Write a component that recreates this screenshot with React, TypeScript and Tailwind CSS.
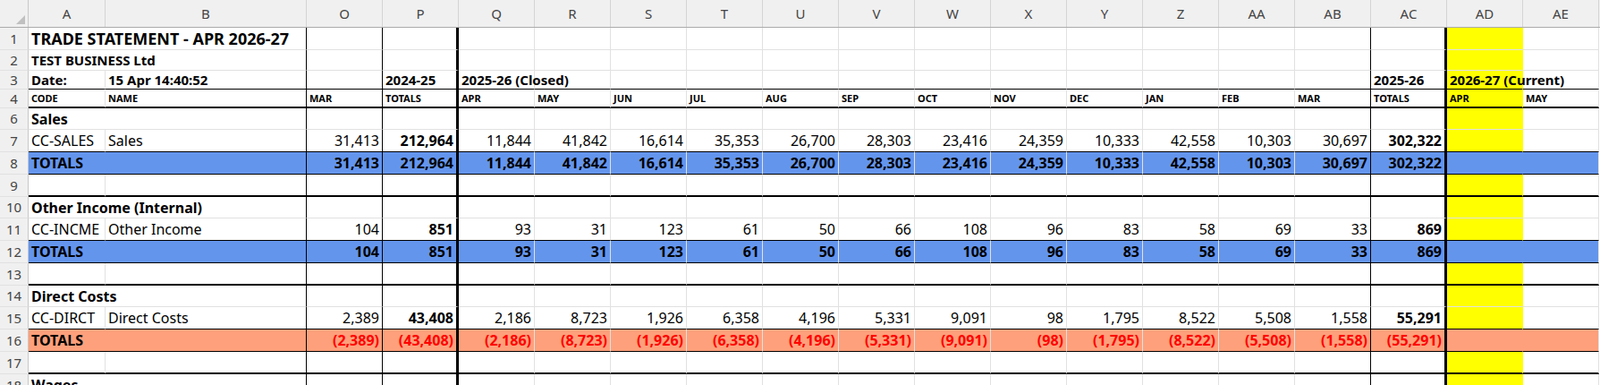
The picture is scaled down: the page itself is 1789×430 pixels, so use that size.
import React from 'react'

type Col = { id: string; w: string; r: string }

const cols: Col[] = [
  { id: 'A', w: 'w-[86px]', r: 'border-r border-r-[#e1e1e1]' },
  { id: 'B', w: 'w-[225px]', r: 'border-r border-r-black' },
  { id: 'O', w: 'w-[85px]', r: 'border-r border-r-black' },
  { id: 'P', w: 'w-[85px]', r: 'border-r-[3px] border-r-black' },
  { id: 'Q', w: 'w-[85px]', r: 'border-r border-r-[#e1e1e1]' },
  { id: 'R', w: 'w-[85px]', r: 'border-r border-r-[#e1e1e1]' },
  { id: 'S', w: 'w-[85px]', r: 'border-r border-r-[#e1e1e1]' },
  { id: 'T', w: 'w-[85px]', r: 'border-r border-r-[#e1e1e1]' },
  { id: 'U', w: 'w-[85px]', r: 'border-r border-r-[#e1e1e1]' },
  { id: 'V', w: 'w-[85px]', r: 'border-r border-r-[#e1e1e1]' },
  { id: 'W', w: 'w-[85px]', r: 'border-r border-r-[#e1e1e1]' },
  { id: 'X', w: 'w-[85px]', r: 'border-r border-r-[#e1e1e1]' },
  { id: 'Y', w: 'w-[85px]', r: 'border-r border-r-[#e1e1e1]' },
  { id: 'Z', w: 'w-[85px]', r: 'border-r border-r-[#e1e1e1]' },
  { id: 'AA', w: 'w-[85px]', r: 'border-r border-r-[#e1e1e1]' },
  { id: 'AB', w: 'w-[85px]', r: 'border-r border-r-black' },
  { id: 'AC', w: 'w-[85px]', r: 'border-r-[3px] border-r-black' },
  { id: 'AD', w: 'w-[85px]', r: 'border-r border-r-transparent' },
  { id: 'AE', w: 'w-[85px]', r: 'border-r border-r-[#e1e1e1]' },
]

type Kind = 'title' | 'sub' | 'head' | 'label' | 'section' | 'detail' | 'blank' | 'total' | 'neg'

type Row = {
  n: number
  h: string
  b: string
  kind: Kind
  cells: string[]
}

const nums = (o: string, p: string, m: string[], ac: string) => ['', '', o, p, ...m, ac, '', '']
const neg = (v: string) => `(${v})`

const sales = ['11,844', '41,842', '16,614', '35,353', '26,700', '28,303', '23,416', '24,359', '10,333', '42,558', '10,303', '30,697']
const other = ['93', '31', '123', '61', '50', '66', '108', '96', '83', '58', '69', '33']
const direct = ['2,186', '8,723', '1,926', '6,358', '4,196', '5,331', '9,091', '98', '1,795', '8,522', '5,508', '1,558']

const thin = 'border-b border-b-[#e1e1e1]'
const black = 'border-b border-b-black'
const heavy = 'border-b-2 border-b-black'

const withLabel = (c: string[], a: string, b: string) => {
  const x = [...c]
  x[0] = a
  x[1] = b
  return x
}

const empty = Array(19).fill('')

const rows: Row[] = [
  { n: 1, h: 'h-[25px]', b: thin, kind: 'title', cells: withLabel(empty, 'TRADE STATEMENT - APR 2026-27', '') },
  { n: 2, h: 'h-[23px]', b: thin, kind: 'sub', cells: withLabel(empty, 'TEST BUSINESS Ltd', '') },
  {
    n: 3, h: 'h-[21px]', b: black, kind: 'label',
    cells: ['Date:', '15 Apr 14:40:52', '', '2024-25', '2025-26 (Closed)', '', '', '', '', '', '', '', '', '', '', '', '2025-26', '2026-27 (Current)', ''],
  },
  {
    n: 4, h: 'h-[21px]', b: heavy, kind: 'head',
    cells: ['CODE', 'NAME', 'MAR', 'TOTALS', 'APR', 'MAY', 'JUN', 'JUL', 'AUG', 'SEP', 'OCT', 'NOV', 'DEC', 'JAN', 'FEB', 'MAR', 'TOTALS', 'APR', 'MAY'],
  },
  { n: 6, h: 'h-[24px]', b: thin, kind: 'section', cells: withLabel(empty, 'Sales', '') },
  { n: 7, h: 'h-[25px]', b: black, kind: 'detail', cells: withLabel(nums('31,413', '212,964', sales, '302,322'), 'CC-SALES', 'Sales') },
  { n: 8, h: 'h-[25px]', b: black, kind: 'total', cells: withLabel(nums('31,413', '212,964', sales, '302,322'), 'TOTALS', '') },
  { n: 9, h: 'h-[25px]', b: heavy, kind: 'blank', cells: empty },
  { n: 10, h: 'h-[24px]', b: thin, kind: 'section', cells: withLabel(empty, 'Other Income (Internal)', '') },
  { n: 11, h: 'h-[25px]', b: black, kind: 'detail', cells: withLabel(nums('104', '851', other, '869'), 'CC-INCME', 'Other Income') },
  { n: 12, h: 'h-[25px]', b: black, kind: 'total', cells: withLabel(nums('104', '851', other, '869'), 'TOTALS', '') },
  { n: 13, h: 'h-[25px]', b: heavy, kind: 'blank', cells: empty },
  { n: 14, h: 'h-[24px]', b: thin, kind: 'section', cells: withLabel(empty, 'Direct Costs', '') },
  { n: 15, h: 'h-[25px]', b: black, kind: 'detail', cells: withLabel(nums('2,389', '43,408', direct, '55,291'), 'CC-DIRCT', 'Direct Costs') },
  { n: 16, h: 'h-[25px]', b: black, kind: 'neg', cells: withLabel(nums(neg('2,389'), neg('43,408'), direct.map(neg), neg('55,291')), 'TOTALS', '') },
  { n: 17, h: 'h-[25px]', b: heavy, kind: 'blank', cells: empty },
  { n: 18, h: 'h-[25px]', b: thin, kind: 'section', cells: withLabel(empty, 'Wages', '') },
]

const SheetRow = ({ row }: { row: Row }) => {
  const spanAB = row.kind === 'title' || row.kind === 'sub' || row.kind === 'total' || row.kind === 'neg' || row.kind === 'section'
  const rowBg = row.kind === 'total' ? 'bg-[#6495ed]' : row.kind === 'neg' ? 'bg-[#fea07b]' : ''
  return (
    <div className={`flex ${row.h}`}>
      <div className="w-[32px] shrink-0 bg-[#f0f0f0] border-r border-r-[#c8c8c8] border-b border-b-[#e1e1e1] flex items-center justify-center text-[15px] text-[#444]">
        {row.n}
      </div>
      {cols.map((c, i) => {
        if (spanAB && i === 1) return null
        const w = spanAB && i === 0 ? 'w-[311px]' : c.w
        const r = spanAB && i === 0 ? cols[1].r : c.r
        const text = row.cells[i]
        const isNum = i >= 2 && (row.kind === 'detail' || row.kind === 'total' || row.kind === 'neg')
        let bg = rowBg
        if (!bg && c.id === 'AD') bg = 'bg-[#ffff00]'
        let font = 'text-[16px] text-black'
        if (row.kind === 'title') font = 'text-[18px] font-bold text-black'
        else if (row.kind === 'sub') font = 'text-[15px] font-bold text-black'
        else if (row.kind === 'label') font = 'text-[15px] font-bold text-black'
        else if (row.kind === 'head') font = 'text-[11px] font-bold text-black'
        else if (row.kind === 'section' || row.kind === 'total') font = 'text-[16px] font-bold text-black'
        else if (row.kind === 'neg') font = i === 0 ? 'text-[16px] font-bold text-black' : 'text-[16px] font-bold text-[#ff0000]'
        else if (row.kind === 'detail' && (c.id === 'P' || c.id === 'AC')) font = 'text-[16px] font-bold text-black'
        const align = isNum ? 'justify-end pr-[3px]' : 'justify-start pl-[3px]'
        const vAlign = row.kind === 'head' ? 'items-end pb-[1px]' : 'items-center'
        return (
          <div
            key={c.id}
            className={`${w} shrink-0 ${r} ${row.b} ${bg} ${font} flex ${vAlign} ${align} whitespace-nowrap overflow-visible`}
          >
            {text}
          </div>
        )
      })}
    </div>
  )
}

export default function App() {
  return (
    <div className="w-[1789px] h-[430px] overflow-hidden bg-white font-['Lato','Liberation_Sans',sans-serif]">
      <div className="flex h-[31px] bg-[#f0f0f0] border-b border-b-[#ababab] text-[15px] text-[#444]">
        <div className="w-[32px] shrink-0 border-r border-r-[#c8c8c8] relative">
          <div className="absolute right-[3px] bottom-[3px] w-0 h-0 border-l-[10px] border-l-transparent border-b-[10px] border-b-[#c0c0c0]" />
        </div>
        {cols.map(c => (
          <div key={c.id} className={`${c.w} shrink-0 border-r border-r-[#d4d4d4] flex items-center justify-center`}>
            {c.id}
          </div>
        ))}
      </div>
      {rows.map(r => (
        <SheetRow key={r.n} row={r} />
      ))}
    </div>
  )
}
